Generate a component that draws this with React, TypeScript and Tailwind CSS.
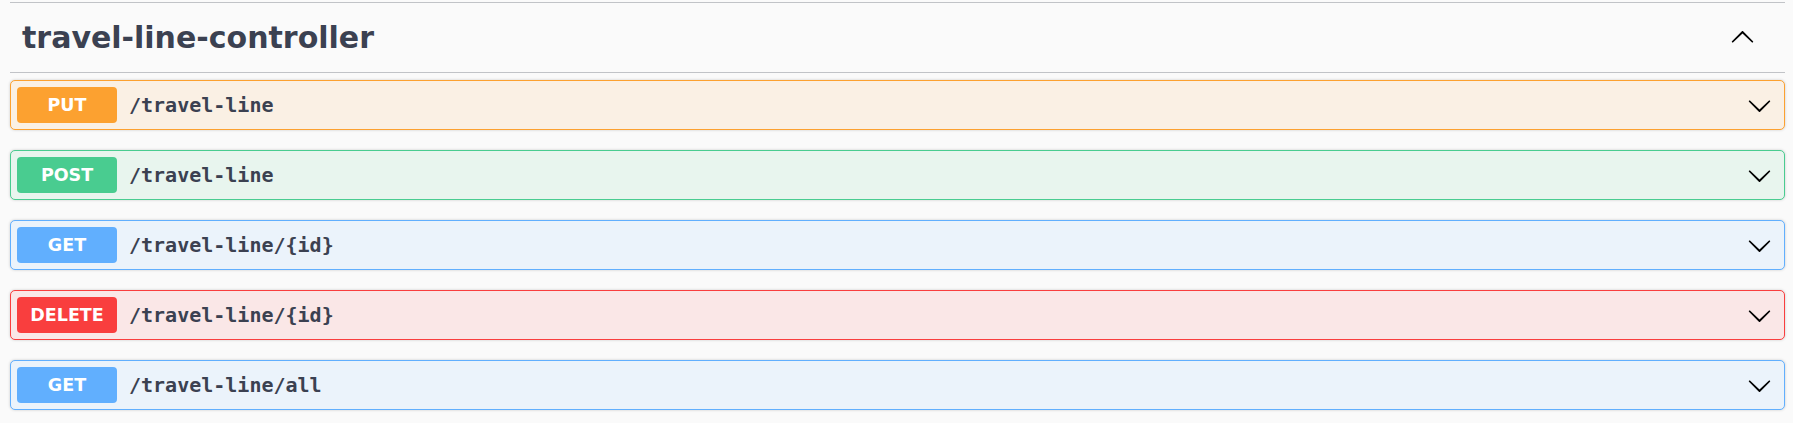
const ops = [
  { method: "PUT", path: "/travel-line", color: "#fca130" },
  { method: "POST", path: "/travel-line", color: "#49cc90" },
  { method: "GET", path: "/travel-line/{id}", color: "#61affe" },
  { method: "DELETE", path: "/travel-line/{id}", color: "#f93e3e" },
  { method: "GET", path: "/travel-line/all", color: "#61affe" },
]

// row colours are written out so tailwind picks them up
const rowClass: Record<string, string> = {
  PUT: "border-[#fca130] bg-[#faf0e4]",
  POST: "border-[#49cc90] bg-[#e8f5ee]",
  GET: "border-[#61affe] bg-[#ebf3fb]",
  DELETE: "border-[#f93e3e] bg-[#fae7e7]",
}

const badgeClass: Record<string, string> = {
  PUT: "bg-[#fca130]",
  POST: "bg-[#49cc90]",
  GET: "bg-[#61affe]",
  DELETE: "bg-[#f93e3e]",
}

function Arrow({ up = false }: { up?: boolean }) {
  return (
    <svg
      width="25"
      height="25"
      viewBox="0 0 20 20"
      className={up ? "rotate-180" : ""}
      aria-hidden="true"
    >
      <path
        fill="#000"
        d="M17.418 6.109c.272-.268.709-.268.979 0s.271.701 0 .969l-7.908 7.83c-.27.268-.707.268-.979 0l-7.908-7.83c-.27-.268-.27-.701 0-.969.271-.268.709-.268.979 0L10 13.25l7.418-7.141z"
      />
    </svg>
  )
}

export default function App() {
  return (
    <div className="bg-[#fafafa] h-[423px] w-full pl-[10px] pr-[8px] pt-[2px] font-['DejaVu_Sans',sans-serif]">
      <div className="border-t border-[#c1c3c7]">
        <h3 className="flex items-center justify-between h-[70px] pl-[12px] pr-[30px] border-b border-[#c1c3c7]">
          <span className="text-[30px] font-bold text-[#3b4151]">travel-line-controller</span>
          <Arrow up />
        </h3>

        <div className="flex flex-col gap-[20px] mt-[7px]">
          {ops.map((op, i) => (
            <div
              key={i}
              className={`flex items-center h-[50px] border rounded-[5px] pl-[6px] pr-[12px] shadow-[0_0_3px_rgba(0,0,0,0.19)] ${rowClass[op.method]}`}
            >
              <div
                className={`w-[100px] h-[36px] rounded-[4px] flex items-center justify-center text-white font-bold text-[17.5px] ${badgeClass[op.method]}`}
              >
                {op.method}
              </div>
              <span className="ml-[12px] flex-1 font-['DejaVu_Sans_Mono',monospace] font-bold text-[20px] text-[#3b4151]">
                {op.path}
              </span>
              <Arrow />
            </div>
          ))}
        </div>
      </div>
    </div>
  )
}
